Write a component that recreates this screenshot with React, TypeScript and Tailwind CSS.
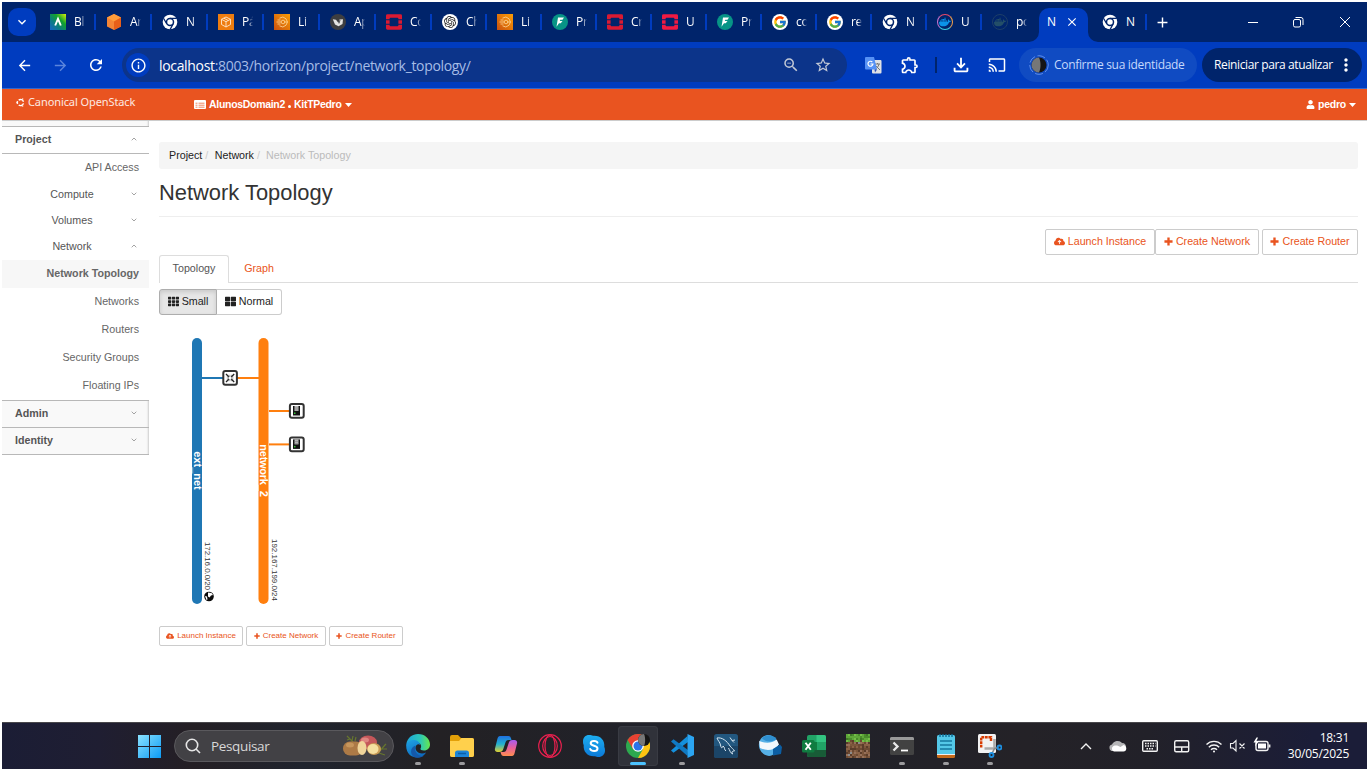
import React from "react";
import { FaUser, FaTh, FaThLarge } from "react-icons/fa";
import { FaCloudArrowUp } from "react-icons/fa6";
import { FcGoogle } from "react-icons/fc";
import { SiOpenstack, SiDocker, SiOpenai } from "react-icons/si";
import {
  MdArrowBack, MdArrowForward, MdRefresh, MdInfoOutline, MdOutlineZoomOut, MdStarBorder,
  MdOutlineExtension, MdOutlineFileDownload, MdCast, MdClose, MdAdd, MdMoreVert, MdKeyboardArrowDown,
} from "react-icons/md";

type Kind = "aws" | "cube" | "chrome" | "box" | "loop" | "medal" | "openstack" | "gpt" | "flash" | "openstack2" | "google" | "docker" | "dockerdim";

const ui = "font-['Open_Sans','Noto_Sans',sans-serif]";

function Favicon({ kind }: { kind: Kind }) {
  switch (kind) {
    case "aws":
      return (
        <svg width="16" height="16" viewBox="0 0 16 16">
          <defs><linearGradient id="aw" x1="0" y1="1" x2="1" y2="0"><stop offset="0" stopColor="#1464c8" /><stop offset=".35" stopColor="#0a7d82" /><stop offset=".65" stopColor="#12a32c" /><stop offset="1" stopColor="#d8f00c" /></linearGradient></defs>
          <rect width="16" height="16" fill="url(#aw)" />
          <path d="M5.2 11.5 8 4.8l2.8 6.7" fill="none" stroke="#fff" strokeWidth="1.9" />
        </svg>
      );
    case "cube":
      return (
        <svg width="16" height="16" viewBox="0 0 16 16">
          <path d="M8 0l7 3.500v9L8 16l-7-3.500v-9z" fill="#f58536" />
          <path d="M8 0l7 3.500L8 7.500 1 3.500z" fill="#ff9d3b" />
          <path d="M8 7.500l7-4v9L8 16z" fill="#e85f19" />
        </svg>
      );
    case "chrome":
      return (
        <svg width="16" height="16" viewBox="0 0 16 16">
          <circle cx="8" cy="8" r="7.300" fill="#fff" />
          <path d="M8 4.300h6.800M11.200 9.900 8 15.600M4.800 9.900 1.500 4.200" stroke="#00246b" strokeWidth="1.200" />
          <circle cx="8" cy="8" r="3.500" fill="#fff" stroke="#00246b" strokeWidth="1.500" />
        </svg>
      );
    case "box":
      return (
        <svg width="16" height="16" viewBox="0 0 16 16">
          <rect width="16" height="16" fill="#ee7d10" />
          <path d="M8 3l4.500 2.300v5.200L8 13l-4.500-2.500V5.300zM3.500 5.300 8 7.700l4.500-2.400M8 7.700V13M5.800 4.200l4.500 2.300" fill="none" stroke="#ffe9cf" strokeWidth=".9" />
        </svg>
      );
    case "loop":
      return (
        <svg width="16" height="16" viewBox="0 0 16 16">
          <defs><linearGradient id="lo" x1="0" y1="1" x2="1" y2="0"><stop offset="0" stopColor="#c9500f" /><stop offset="1" stopColor="#fb9d05" /></linearGradient></defs>
          <rect width="16" height="16" fill="url(#lo)" />
          <path d="M5.500 4.200a4.800 4.800 0 1 1 0 7.600M2.500 8h4.500M3.500 6h3M3.500 10h3M10.500 8h3" fill="none" stroke="#ffd9a0" strokeWidth=".8" />
          <circle cx="9" cy="8" r="1.800" fill="none" stroke="#ffd9a0" strokeWidth=".8" />
        </svg>
      );
    case "medal":
      return (
        <svg width="16" height="16" viewBox="0 0 16 16">
          <circle cx="8" cy="8" r="8" fill="#3d3e40" />
          <path d="M2.800 5.200 6 5.800 8.500 9l1-3.500L13 5.200 12.500 10l-4 2.200L5 10.500z" fill="#e4e4e2" />
          <path d="M9 9.500l1-3.500" stroke="#333" strokeWidth=".8" />
        </svg>
      );
    case "openstack":
      return <SiOpenstack size={16} color="#da1a32" />;
    case "openstack2":
      return <SiOpenstack size={16} color="#f01a42" />;
    case "gpt":
      return (
        <span className="flex h-4 w-4 items-center justify-center rounded-full bg-white"><SiOpenai size={12} color="#222" /></span>
      );
    case "flash":
      return (
        <svg width="16" height="16" viewBox="0 0 16 16">
          <circle cx="8" cy="8" r="8" fill="#079486" />
          <path d="M6 3.500h6l-1.500 2.300H8.300L7.800 7h2.700L8.800 9.200H7L4.500 12.800z" fill="#fff" />
        </svg>
      );
    case "google":
      return <span className="flex h-4 w-4 items-center justify-center rounded-full bg-white"><FcGoogle size={14} /></span>;
    case "docker":
      return (
        <span className="flex h-4 w-4 items-center justify-center rounded-full border border-t-[#e84a6a] border-r-[#f5a34a] border-b-[#3fd0e0] border-l-[#c874d0]"><SiDocker size={12} color="#0b93e8" /></span>
      );
    default:
      return (
        <span className="flex h-4 w-4 items-center justify-center rounded-full border border-[#1d3e68]"><SiDocker size={12} color="#234e68" /></span>
      );
  }
}

const tabs: [Kind, string][] = [
  ["aws", "Bl"], ["cube", "Ar"], ["chrome", "N"], ["box", "Pá"], ["loop", "Li"], ["medal", "Ap"], ["openstack", "Co"], ["gpt", "Ch"],
  ["loop", "Li"], ["flash", "Pr"], ["openstack", "Cr"], ["openstack2", "U"], ["flash", "Pr"], ["google", "co"], ["google", "re"], ["chrome", "N"], ["docker", "U"], ["dockerdim", "po"],
];

function TabStrip() {
  return (
    <div className={`flex h-10 bg-[#00246b] text-[12px] text-white ${ui}`}>
      <div className="mt-1.5 ml-1.5 flex h-7 w-7 items-center justify-center rounded-[10px] bg-[#003cbf]"><MdKeyboardArrowDown size={16} /></div>
      <div className="ml-3.5 flex items-center">
        {tabs.map(([kind, label], i) => (
          <div key={i} className={`flex items-center ${i < 7 ? "w-14" : "w-[55px]"}`}>
            <div className="flex w-4 justify-center"><Favicon kind={kind} /></div>
            <div className="ml-2 w-[11px] overflow-hidden tracking-[-0.3px] whitespace-nowrap [mask-image:linear-gradient(to_right,#000_60%,transparent)]">{label}</div>
            {i < 17 && <div className={`h-4 w-0.5 bg-[#003cbf] ${i < 7 ? "ml-[9px]" : "ml-2"}`} />}
          </div>
        ))}
      </div>
      <div className="flex items-end">
        <svg className="-ml-[18px]" width="10" height="10" viewBox="0 0 10 10"><path d="M10 0v10H0A10 10 0 0 0 10 0z" fill="#003cbf" /></svg>
        <div className="flex h-[34px] w-[49px] items-center rounded-t-[10px] bg-[#003cbf] pb-1.5 pl-2"><span className="w-[18px]">N</span><MdClose size={14} /></div>
        <svg width="10" height="10" viewBox="0 0 10 10"><path d="M0 0v10h10A10 10 0 0 1 0 0z" fill="#003cbf" /></svg>
      </div>
      <div className="ml-1 flex items-center">
        <Favicon kind="chrome" />
        <span className="ml-2 w-[19px]">N</span>
        <div className="h-4 w-0.5 bg-[#003cbf]" />
        <MdAdd className="ml-[7px]" size={17} />
      </div>
      <svg className="mt-3.5 ml-[76px]" width="104" height="12" viewBox="0 0 104 12" fill="none" stroke="#fff" strokeWidth="1">
        <path d="M1 6.500h10M93 1l10 10M103 1 93 11" />
        <rect x="46.500" y="3.500" width="7" height="7.500" rx="1.500" />
        <path d="M48.500 1.500H54a2 2 0 0 1 2 2V9" />
      </svg>
    </div>
  );
}

function Toolbar() {
  return (
    <div className={`flex h-[47px] items-center border-b border-[#3467cd] bg-[#003cbf] text-white ${ui}`}>
      <MdArrowBack className="ml-3.5" size={17} />
      <MdArrowForward className="ml-[19px] text-[#5b85dc]" size={17} />
      <MdRefresh className="ml-[18px]" size={18} />
      <div className="ml-[17px] flex h-[34px] w-[725px] items-center rounded-full bg-[#0c348a]">
        <div className="ml-1 flex h-6 w-6 items-center justify-center rounded-full bg-[#003cbf]"><MdInfoOutline size={17} /></div>
        <div className="ml-[9px] w-[616px] text-[14px] tracking-[-0.330px] whitespace-nowrap text-[#a6bce6]"><span className="text-white">localhost</span>:8003/horizon/project/network_topology/</div>
        <MdOutlineZoomOut className="ml-[7px] text-[#c3c9d6]" size={18} />
        <MdStarBorder className="ml-3.5 text-[#c3c9d6]" size={18} />
      </div>
      <svg className="ml-[18px]" width="17" height="17" viewBox="0 0 17 17">
        <rect x="7" y="3" width="9.500" height="13.500" rx="1" fill="#dfe1e5" />
        <path d="M10 7h5M12.500 6v1M14 7c-.6 3-2.500 4.500-4 5.500M11 9l4 4" stroke="#777" fill="none" />
        <path d="M1 0h8l3 12.500H1a1 1 0 0 1-1-1V1a1 1 0 0 1 1-1z" fill="#5691f5" />
        <path d="M7.300 5A2.500 2.500 0 1 0 8 7H5.500" stroke="#fff" strokeWidth="1.200" fill="none" />
        <path d="M9.500 12.500H12L10 15.500z" fill="#2b4db5" />
      </svg>
      <MdOutlineExtension className="ml-[18px]" size={20} />
      <div className="ml-[15px] h-4 w-0.5 bg-[#00246b]" />
      <MdOutlineFileDownload className="ml-[13px]" size={22} />
      <MdCast className="ml-4" size={18} />
      <div className="ml-[13px] flex h-[34px] w-[178px] items-center rounded-full bg-[#104bc2] text-[12px] whitespace-nowrap text-[#c6d8fb]">
        <svg className="ml-2.5" width="20" height="20" viewBox="0 0 20 20">
          <circle cx="10" cy="10" r="9.300" fill="none" stroke="#5f8ee8" strokeWidth="1" strokeDasharray="8 2.500" />
          <circle cx="10" cy="10" r="7.500" fill="#151515" />
          <path d="M10 2.500a7.500 7.500 0 0 0 0 15c2-4 2-11 0-15z" fill="#777" />
        </svg>
        <span className="ml-[5px] tracking-[-0.320px]">Confirme sua identidade</span>
      </div>
      <div className="ml-[5px] flex h-[34px] w-40 items-center rounded-full bg-[#00246b] text-[12px] whitespace-nowrap">
        <span className="ml-3 w-[122px] tracking-[-0.380px]">Reiniciar para atualizar</span>
        <MdMoreVert size={20} />
      </div>
    </div>
  );
}

function Chevron({ up }: { up?: boolean }) {
  return (
    <svg className="mb-px shrink-0" width="6" height="4" viewBox="0 0 6 4"><path d={up ? "M.7 3.300 3 1l2.300 2.300" : "M.7.700 3 3 5.300.700"} fill="none" stroke="#999" strokeWidth=".9" /></svg>
  );
}

function Plus({ size }: { size: number }) {
  return <svg width={size} height={size} viewBox="0 0 10 10"><path d="M5 .5v9M.5 5h9" stroke="currentColor" strokeWidth="2.600" /></svg>;
}

function Caret() {
  return <svg className="ml-[3px]" width="7" height="4" viewBox="0 0 7 4"><path d="M0 0h7L3.500 4z" fill="#fff" /></svg>;
}

function Header() {
  return (
    <div className="flex h-8 border-b border-[#ccc] bg-[#e95420] text-white">
      <div className="flex h-[26px] w-[192px] items-center pl-3.5">
        <svg width="9" height="9" viewBox="0 0 10 10" fill="none" stroke="#fff" strokeWidth="1.600">
          <path d="M3 2.300A3.400 3.400 0 0 1 8.300 4.200M8.300 6A3.400 3.400 0 0 1 3 7.800M1.800 6.500a3.400 3.400 0 0 1 0-3" />
          <path d="M7 1.200h1M.5 5h1M7 9h1" />
        </svg>
        <span className="ml-[3px] font-['Noto_Sans',sans-serif] text-[11px] tracking-[-0.090px] whitespace-nowrap text-[#fde9e1]">Canonical OpenStack</span>
      </div>
      <div className="flex grow items-center font-['Liberation_Sans',sans-serif] text-[10.500px] font-bold">
        <svg width="12" height="9" viewBox="0 0 12 9"><rect width="12" height="9" rx="1" fill="#fff" /><path d="M1.500 3.200h2M4.500 3.200h6M1.500 5.200h2M4.500 5.200h6M1.500 7.200h2M4.500 7.200h6" stroke="#e95420" strokeWidth=".7" /></svg>
        <span className="ml-[3px] tracking-[-0.300px]">AlunosDomain2</span>
        <span className="mt-1 ml-[3px] h-[3px] w-[3px] rounded-full bg-white" />
        <span className="ml-[3px] tracking-[-0.300px]">KitTPedro</span>
        <Caret />
      </div>
      <div className="flex items-center pr-[11px] font-['Liberation_Sans',sans-serif] text-[10.500px] font-bold">
        <FaUser size={9} /><span className="ml-[3px] tracking-[-0.250px]">pedro</span><Caret />
      </div>
    </div>
  );
}

function Sidebar() {
  const row = "flex items-center justify-end pr-2.5 pb-0.5 h-7";
  const panel = "flex items-center justify-between border-b border-[#b8b8b8] bg-[#f9f9f9] pr-3 pl-[13px] pb-px font-bold text-[#555] shadow-[inset_-3px_0_2px_-2px_#ccc]";
  return (
    <div className="w-[147px] shrink-0 text-[10.700px] whitespace-nowrap text-[#666]">
      <div className="h-[6px] border-b border-[#b8b8b8] bg-[#f9f9f9] shadow-[inset_-3px_0_2px_-2px_#ccc]" />
      <div className="flex h-[27px] items-center justify-between border-b border-[#b8b8b8] pr-3 pb-0.5 pl-[13px] font-bold text-[#555]">Project<Chevron up /></div>
      <div className="flex h-[27px] items-center justify-end pr-2.5">API Access</div>
      {["Compute", "Volumes", "Network"].map((n, i) => (
        <div key={n} className="flex h-[26px] items-center pr-3 text-[#555]">
          <span className="grow pl-[11px] text-center">{n}</span><Chevron up={i === 2} />
        </div>
      ))}
      <div className={`mt-px bg-[#f7f7f7] font-bold ${row}`}>Network Topology</div>
      {["Networks", "Routers", "Security Groups", "Floating IPs"].map((n) => <div key={n} className={row}>{n}</div>)}
      <div className={`h-7 border-t ${panel}`}>Admin<Chevron /></div>
      <div className={`h-[27px] ${panel}`}>Identity<Chevron /></div>
    </div>
  );
}

function Instance({ y }: { y: number }) {
  return (
    <g>
      <path d={`M110 ${y}h22`} stroke="#ff7f0e" strokeWidth="2" />
      <rect x="130.900" y={y - 7} width="13.800" height="13.800" rx="2" fill="#fff" stroke="#333" strokeWidth="2" />
      <rect x="134" y={y - 5} width="7" height="9.500" fill="#111" />
      <rect x="135.500" y={y - 5} width="4" height="5" fill="#bbb" />
      <path d={`M135.500 ${y - 3}h4M135.500 ${y - 1}h4`} stroke="#777" strokeWidth=".6" />
      <rect x="135" y={y + 1.5} width="1.500" height="1.500" fill="#36c236" />
    </g>
  );
}

function Topology() {
  return (
    <svg width="300" height="311" viewBox="0 0 300 311" fontFamily="Liberation Sans, sans-serif">
      <rect x="33" y="23" width="10" height="266" rx="5" fill="#1f77b4" />
      <rect x="99.500" y="23" width="10" height="266" rx="5" fill="#ff7f0e" />
      <path d="M43 63h21" stroke="#1f77b4" strokeWidth="2" />
      <path d="M78 63h22" stroke="#ff7f0e" strokeWidth="2" />
      <rect x="64.300" y="56" width="13.600" height="13.800" rx="2" fill="#fff" stroke="#333" strokeWidth="2" />
      <path d="M67 59l3 3M75.200 59l-3 3M67 67l3-3M75.200 67l-3-3" stroke="#222" strokeWidth="1.300" />
      <path d="M70 59.800V62h-2.200M72.200 59.800V62h2.200M70 66.200V64h-2.200M72.200 66.200V64h2.200" stroke="#444" strokeWidth=".6" fill="none" />
      <Instance y={96} />
      <Instance y={129.400} />
      <text transform="translate(34.500 155.500) rotate(90)" textAnchor="middle" fontWeight="bold" fontSize="11" fill="#fff">ext_net</text>
      <text transform="translate(101 155.500) rotate(90)" textAnchor="middle" fontWeight="bold" fontSize="11" textLength="52.500" fill="#fff">network_2</text>
      <text transform="translate(46 227) rotate(90)" fontSize="8" fill="#333" textLength="48">172.16.0.0/20</text>
      <text transform="translate(113 224) rotate(90)" fontSize="8" fill="#333" textLength="62">192.167.199.0/24</text>
      <circle cx="50" cy="281.500" r="4.800" fill="#0a0a0a" />
      <path d="M49 277.500l3.500.5 1.500 2-2 .5-1.500 2-1.500-1zM46 281l2 .5.5 3-1 .5z" fill="#fff" />
    </svg>
  );
}

const btn = "flex h-[26px] items-center justify-center rounded-[2px] border border-[#ccc] bg-white pb-px text-[10.700px] whitespace-nowrap";
const small = "flex h-5 items-center justify-center gap-[3px] rounded-[2px] border border-[#ccc] pb-px text-[8px] whitespace-nowrap text-[#e95420]";

function Content() {
  return (
    <div className="ml-2.5 w-[1199px] pt-[21px] text-[10.700px]">
      <div className="flex h-[27px] items-center rounded-[3px] bg-[#f5f5f5] pl-2.5 text-[#222]">
        Project<span className="mr-[3px] ml-[3px] w-[6.500px] text-[#ccc]">/</span><span>Network</span><span className="mr-[3px] ml-[3px] w-[6px] text-[#ccc]">/</span><span className="text-[#bbb]">Network Topology</span>
      </div>
      <h1 className="flex h-12 items-start border-b border-[#eee] pt-[10px] text-[21.900px] leading-[27px] text-[#333]">Network Topology</h1>
      <div className="mt-3 flex justify-end text-[#e95420]">
        <div className={`${btn} w-[110px] gap-[3px]`}><FaCloudArrowUp size={11} />Launch Instance</div>
        <div className={`${btn} w-[104px] gap-[3px]`}><Plus size={9} />Create Network</div>
        <div className={`${btn} ml-[3px] w-24 gap-[3px]`}><Plus size={9} />Create Router</div>
      </div>
      <div className="flex h-7 border-b border-[#ddd]">
        <div className="flex h-7 w-[70px] items-center justify-center rounded-t-[3px] border border-b-0 border-[#ddd] bg-white pb-0.5 text-[#555]">Topology</div>
        <div className="flex w-[60px] items-center justify-center text-[#e95420]">Graph</div>
      </div>
      <div className="mt-1.5 flex text-[#222]">
        <div className="flex h-[26px] w-[58px] items-center justify-center gap-[3px] rounded-l-[3px] border border-[#adadad] bg-[#e6e6e6] pb-px shadow-[inset_0_2px_4px_rgba(0,0,0,0.13)]"><FaTh size={11} />Small</div>
        <div className="flex h-[26px] w-[65px] items-center justify-center gap-[3px] rounded-r-[3px] border border-l-0 border-[#ccc] pb-px"><FaThLarge size={11} />Normal</div>
      </div>
      <Topology />
      <div className="flex gap-[3px]">
        <div className={`${small} w-[84px]`}><FaCloudArrowUp size={8} />Launch Instance</div>
        <div className={`${small} w-20`}><Plus size={6} />Create Network</div>
        <div className={`${small} w-[74px]`}><Plus size={6} />Create Router</div>
      </div>
    </div>
  );
}

const dirt = ["#8a6246", "#6d4a33", "#96705a", "#5a3c2a", "#7b563c"];
const grass = ["#5fa83a", "#4a8c2c", "#74bf48", "#3f7a26"];

const apps: { bar?: boolean; active?: boolean; art: React.ReactNode }[] = [
  { bar: true, art: <>
    <path d="M.3 10C1.500 3.500 6.500 0 12 0c7 0 12 5 12 10.500 0 3.500-2.500 6-6 6-2.500 0-4-1-3.500-2 1.500-2 .5-6-4-6C6 8.500 1 9 .3 10z" fill="url(#edgeTop)" />
    <path d="M.2 10.500C1.500 7 5 5.500 8.500 6c3 .4 5.500 2.500 5.500 5-1-1.500-4.500-1-4.500 3 0 4 5 7 10.500 4.500C16.500 26-.500 26 .2 10.500z" fill="url(#edgeLow)" />
    <path d="M9.500 11.500c-2 5 2 11 8 10.500-3 2-6.500 2.300-9.500 1C3 19 5 13 9.500 11.500z" fill="#1559ab" /></> },
  { bar: true, art: <>
    <path d="M0 3a2 2 0 0 1 2-2h6l3 3h11a2 2 0 0 1 2 2v15a2 2 0 0 1-2 2H2a2 2 0 0 1-2-2z" fill="#e3a008" />
    <path d="M0 7h9l2.500-3H22a2 2 0 0 1 2 2v15a2 2 0 0 1-2 2H2a2 2 0 0 1-2-2z" fill="#ffd04c" />
    <path d="M5 23v-4a2.500 2.500 0 0 1 2.500-2.500h9A2.500 2.500 0 0 1 19 19v4z" fill="#1d85d8" /><path d="M8 19.500h8" stroke="#0b5fa8" strokeWidth="1.500" /></> },
  { art: <>
    <path d="M6 2h8.500a2.500 2.500 0 0 1 2.400 2l.6 2h-3c-2 0-2.600 1-3.200 3l-2 6c-.7 2-1.500 3-4 3H3.500C1.500 18 .5 16.500 1 14.500L3.500 4.500C4 3 4.500 2 6 2z" fill="url(#copA)" />
    <path d="M18 22H9.500a2.500 2.500 0 0 1-2.400-2l-.6-2h3c2 0 2.600-1 3.200-3l2-6c.7-2 1.500-3 4-3h1.800c2 0 3 1.500 2.500 3.500l-2.500 10c-.5 1.500-1 2.500-2.500 2.500z" fill="url(#copB)" /></> },
  { art: <g fill="none" stroke="#e8204e" strokeWidth="1.200"><circle cx="12" cy="12" r="11.300" /><ellipse cx="12" cy="12" rx="5" ry="11" /><ellipse cx="12" cy="12" rx="7.300" ry="9.500" /></g> },
  { art: <>
    <path d="M7 1c2 0 3 .6 4 .8C18 1 23 6 22.300 13c.5 1 .7 2 .7 3.500 0 4-3 6.500-6.500 6.500-1.500 0-2.500-.3-3.500-.8C6 23 1 18 1.700 11 1.200 10 1 9 1 7.500 1 3.500 3.500 1 7 1z" fill="url(#sky)" />
    <path d="M15.500 8.800C15 6.500 9 6 8.700 9c-.2 3.500 6.800 2 6.800 5.500 0 3.500-6.300 3-7.300.5" fill="none" stroke="#fff" strokeWidth="2" strokeLinecap="round" /></> },
  { bar: true, active: true, art: <>
    <circle cx="12" cy="12" r="12" fill="#2da94f" />
    <path d="M12 6h10.400A12 12 0 0 1 12 24l5-9z" fill="#fdc412" />
    <path d="M1.600 6A12 12 0 0 1 22.400 6H12L7 15z" fill="#e84132" />
    <circle cx="12" cy="12" r="5.800" fill="#fff" /><circle cx="12" cy="12" r="4.500" fill="#2b74ea" />
    <circle cx="18" cy="6" r="6" fill="#151515" /><path d="M18 0a6 6 0 0 0 0 12c1.500-3 1.500-9 0-12z" fill="#777" /></> },
  { bar: true, art: <>
    <path d="M17.500 2 1 16.500l2.500 2.300L18 8z" fill="#1490dd" /><path d="M17.500 22 1 7.500l2.500-2.300L18 16z" fill="#1079c2" /><path d="M17.500 0 24 3v18l-6.500 3z" fill="#2ba5f2" /></> },
  { art: <>
    <rect width="24" height="24" rx="2.500" fill="#22577f" /><path d="M0 12h24v9.500a2.500 2.500 0 0 1-2.500 2.500h-19A2.500 2.500 0 0 1 0 21.500z" fill="#1b4568" />
    <path d="M3 4c5-1 10 3 13 8 1.500 2 3.500 3 4.500 5-2 0-3 .5-2 3-2-1-3-4-4-6M3 4c1 3 3 4 3.500 7S8 15 9 12c2 1 1 4 3 5M16 3.500l2 3 3-.5M18 6.500l2 2" fill="none" stroke="#d5e5f0" strokeWidth="1" /></> },
  { art: <>
    <ellipse cx="10.500" cy="11.500" rx="9.500" ry="10.500" transform="rotate(-20 10.500 11.500)" fill="#56b0e6" /><path d="M1.200 7c5 2 12 3 17.500-1.500l2.300 5C16 17 8 17 2 14z" fill="#f2f8fc" /><path d="M4 4.500C8 0 15 .5 18.500 5 14 8.500 8 8 4 4.500z" fill="#2f8fd0" />
    <path d="M15 15l7-4.500 2 2.500-1 7-8 1.500z" fill="#0c5ea3" /></> },
  { art: <>
    <rect x="5" y="1" width="19" height="22" rx="2" fill="#21a366" /><path d="M14.500 1H22a2 2 0 0 1 2 2v5h-9.500z" fill="#33c481" /><path d="M5 8h10v8H5z" fill="#107c41" /><path d="M5 16h19v5a2 2 0 0 1-2 2H7a2 2 0 0 1-2-2z" fill="#185c37" />
    <rect y="6" width="12.500" height="12.500" rx="1.500" fill="#107c41" /><path d="M3.500 8.800l5.300 7M8.800 8.800l-5.300 7" stroke="#fff" strokeWidth="1.900" /></> },
  { art: <g shapeRendering="crispEdges">{Array.from({ length: 144 }, (_, i) => {
    const x = i % 12, y = Math.floor(i / 12), h = (x * 7 + y * 13 + x * y * 5 + (x ^ y) * 3) % 17;
    const top = y < 3 || (y === 3 && h % 2 === 0);
    return <rect key={i} x={x * 2} y={y * 2} width="2" height="2" fill={top ? grass[h % 4] : h === 16 ? "#8d8d8d" : dirt[h % 5]} />;
  })}</g> },
  { bar: true, art: <>
    <rect y="3" width="24" height="18" rx="1.500" fill="#424242" /><path d="M0 6V4.500A1.500 1.500 0 0 1 1.500 3h21A1.500 1.500 0 0 1 24 4.500V6z" fill="#999" /><path d="M3.500 8.500 7.500 12.500l-4 4" fill="none" stroke="#e8e8e8" strokeWidth="2.300" /><path d="M11 16.500h7" stroke="#fff" strokeWidth="1.800" /></> },
  { bar: true, art: <>
    <rect x="3" y="1" width="18" height="22" rx="1.500" fill="#54c8e8" /><path d="M3 20.500h18v2a1.500 1.500 0 0 1-1.500 1.500h-15A1.500 1.500 0 0 1 3 22.500z" fill="#c56a1a" /><path d="M3 20h18v1H3z" fill="#eee" />
    <path d="M6 0v3M9 0v3M12 0v3M15 0v3M18 0v3" stroke="#0d6c96" strokeWidth="1.400" /><path d="M6 7h12M6 11h12M6 15h12" stroke="#14779f" strokeWidth="1.700" /></> },
  { bar: true, art: <>
    <rect width="18" height="19" rx="1.500" fill="#f2f2f2" /><path d="M3.200 13.500V3.200H13V7" fill="none" stroke="#d83b01" strokeWidth="2.400" strokeDasharray="2.800 .7" /><path d="M6.500 14.500h10V5" fill="none" stroke="#aaa" strokeWidth="2.600" /><path d="M14 19.500l2.500-5 4-1" stroke="#888" strokeWidth="1.500" fill="none" />
    <circle cx="21.500" cy="13.500" r="2" fill="none" stroke="#1d8fe0" strokeWidth="1.800" /><circle cx="13.500" cy="21" r="2" fill="none" stroke="#1d8fe0" strokeWidth="1.800" /></> },
];

function Taskbar() {
  return (
    <div className={`flex h-[47px] border-t border-[#48474b] bg-[linear-gradient(to_right,#1b1d35_0%,#1f1e32_7%,#241f24_14%,#20242e_22%,#232124_32%,#20222b_50%,#242227_75%,#222129_84%,#1b1d38_96%)] text-white ${ui}`}>
      <svg className="mt-3 ml-[136px]" width="23" height="23" viewBox="0 0 23 23">
        <defs>
          <linearGradient id="win" x1="0" y1="0" x2="1" y2="1"><stop offset="0" stopColor="#8ae2ff" /><stop offset="1" stopColor="#0c9bf5" /></linearGradient>
          <linearGradient id="edgeTop"><stop offset="0" stopColor="#1ba5dc" /><stop offset=".6" stopColor="#2dc7b5" /><stop offset="1" stopColor="#66e84c" /></linearGradient>
          <linearGradient id="edgeLow" x1="0" y1="0" x2=".5" y2="1"><stop offset="0" stopColor="#1fa3e5" /><stop offset="1" stopColor="#0d6cc0" /></linearGradient>
          <linearGradient id="copA" x1="0" y1="0" x2="0" y2="1"><stop offset="0" stopColor="#1f70e0" /><stop offset=".5" stopColor="#22b0d0" /><stop offset="1" stopColor="#e0cf30" /></linearGradient>
          <linearGradient id="copB" x1="0" y1="0" x2="0" y2="1"><stop offset="0" stopColor="#a75bf0" /><stop offset=".5" stopColor="#e8609a" /><stop offset="1" stopColor="#ff8e4e" /></linearGradient>
          <linearGradient id="sky" x1="0" y1="0" x2="0" y2="1"><stop offset="0" stopColor="#1daef0" /><stop offset="1" stopColor="#0c7ad8" /></linearGradient>
        </defs>
        <path d="M0 0h11v11H0zM12 0h11v11H12zM0 12h11v11H0zM12 12h11v11H12z" fill="url(#win)" />
      </svg>
      <div className="mt-[7px] ml-[13px] flex h-8 w-[220px] items-center rounded-full border border-[#5a595d] bg-[#424145]">
        <svg className="ml-2.5" width="16" height="16" viewBox="0 0 16 16" fill="none" stroke="#e6e6e6" strokeWidth="1.600"><circle cx="7" cy="7" r="5.700" /><path d="M11 11l4 4" /></svg>
        <span className="ml-2.5 w-[131px] text-[13.500px] tracking-[-0.350px] text-[#d8d8d8]">Pesquisar</span>
        <svg width="46" height="24" viewBox="0 0 46 24">
          <path d="M11 8 5 2M8 5 5 6M10 7l1-5M13 7l1-4M36 19l7-8M40 15h5M38 17v-4M37 19l6 2M42 12l2-2" stroke="#66752e" strokeWidth="1.200" fill="none" />
          <ellipse cx="26" cy="8.500" rx="9" ry="7" fill="#c4575a" /><ellipse cx="23" cy="6" rx="4" ry="2.500" fill="#de8580" />
          <rect x="1" y="7.500" width="20" height="14" rx="7" fill="#ad7a46" /><ellipse cx="8" cy="11" rx="4" ry="2.500" fill="#c6955c" />
          <ellipse cx="20" cy="14" rx="4.500" ry="7" fill="#f0d59b" /><ellipse cx="32" cy="15" rx="7" ry="6" fill="#c99a55" /><ellipse cx="31" cy="15" rx="5.500" ry="5" fill="#f5dfa0" />
        </svg>
      </div>
      <div className="ml-0.5 flex">
        {apps.map((a, i) => (
          <div key={i} className="flex w-11 flex-col items-center pt-[3px]">
            <div className={`flex h-10 w-10 flex-col items-center rounded-[4px] pt-2 ${a.active ? "bg-[#30323a] shadow-[inset_0_0_0_1px_#393b43]" : ""}`}>
              <svg width="24" height="24" viewBox="0 0 24 24">{a.art}</svg>
              {a.bar && <div className={`mt-1 h-[3px] shrink-0 rounded-full ${a.active ? "w-4 bg-[#4cc2ff]" : "w-1.5 bg-[#9c9b9e]"}`} />}
            </div>
          </div>
        ))}
      </div>
      <svg className="mt-[11px] ml-[66px]" width="196" height="24" viewBox="1078 734 196 24" fill="none" stroke="#f2f2f2" strokeWidth="1.400">
        <path d="M1081 749l5-5 5 5" />
        <path d="M1113 751a3.300 3.300 0 0 1-1-6.500 6 6 0 0 1 10-1.500c3 0 4 2 4 4z" fill="#b5b5b7" stroke="none" />
        <path d="M1114 751.500a3 3 0 0 1-.5-5.500c3-1 5 0 7 1l3-2c4 1 3.500 6.500 0 6.500z" fill="#fff" stroke="none" />
        <rect x="1142.700" y="740.700" width="14.600" height="10.600" rx="1" /><path d="M1145 743.500h10.500M1145 746h10.500M1146.500 748.800h7.500" strokeDasharray="1.500 1" />
        <rect x="1174.700" y="740.700" width="14" height="11" rx="1.500" /><path d="M1175 747h13.500M1181.700 747v5" />
        <path d="M1206.500 744.500a10.500 10.500 0 0 1 15 0M1208.800 747.200a7.300 7.300 0 0 1 10.400 0M1211 749.700a4.200 4.200 0 0 1 6 0" /><circle cx="1214" cy="751.500" r="1" fill="#fff" stroke="none" />
        <path d="M1230.500 743.500h2.500l3-3v10.500l-3-3h-2.500zM1239.500 743.500l5 5M1244.500 743.500l-5 5" strokeWidth="1.100" />
        <rect x="1256" y="741.500" width="12" height="9" rx="2" /><rect x="1258" y="743.500" width="8" height="5" fill="#fff" stroke="none" /><path d="M1269.500 744.500v3" strokeWidth="1.800" /><path d="M1256.500 737.500l-3 5h2.500l-1 4 4-5.500h-2.500l1.500-3.500z" fill="#fff" stroke="none" />
      </svg>
      <div className="flex grow flex-col items-end pt-[7px] pr-[18px] text-[12px] leading-4 tracking-[-0.250px]"><span>18:31</span><span>30/05/2025</span></div>
    </div>
  );
}

export default function App() {
  return (
    <div className="flex h-[771px] w-[1369px] flex-col overflow-hidden bg-white p-0.5 font-['Liberation_Sans',sans-serif] leading-normal">
      <TabStrip />
      <Toolbar />
      <Header />
      <div className="flex h-[601px] shrink-0"><Sidebar /><Content /></div>
      <Taskbar />
    </div>
  );
}
